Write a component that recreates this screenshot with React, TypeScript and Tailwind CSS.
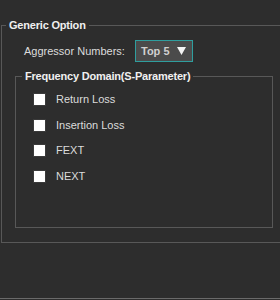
import React from 'react';

const items = ['Return Loss', 'Insertion Loss', 'FEXT', 'NEXT'];

const App = () => {
  return (
    <div
      className="relative w-[280px] h-[300px] overflow-hidden bg-[#2d2d2d] text-[11px] text-[#dcdcdc] whitespace-nowrap"
      style={{ fontFamily: '"Liberation Sans", Arial, sans-serif' }}
    >
      {/* Generic Option group */}
      <fieldset className="ml-[1px] mt-[17px] w-[300px] h-[226px] border border-[#585858]">
        <legend className="ml-[4px] px-[3px] font-bold leading-[16px] tracking-[-0.2px] text-[#f0f0f0]">
          Generic Option
        </legend>

        <div className="mt-[7px] ml-[22px] flex items-center h-[22px]">
          <span className="w-[111px]">Aggressor Numbers:</span>
          <div className="w-[58px] h-[22px] border border-[#2f9e9e] bg-[#4b4b4b] flex items-center justify-between pl-[5px] pr-[6px]">
            <span className="font-bold text-[#d0d0d0]">Top 5</span>
            <svg width="9" height="8" viewBox="0 0 9 8">
              <path d="M0 0 H9 L4.5 8 Z" fill="#f4f4f4" />
            </svg>
          </div>
        </div>

        {/* Frequency Domain group */}
        <fieldset className="ml-[13px] mt-[6px] w-[258px] h-[160px] border border-[#585858]">
          <legend className="ml-[6px] px-[3px] font-bold leading-[16px] tracking-[-0.2px] text-[#f0f0f0]">
            Frequency Domain(S-Parameter)
          </legend>
          <div className="mt-[9px] ml-[17px] flex flex-col gap-[12.5px]">
            {items.map((label) => (
              <label key={label} className="flex items-center h-[13px]">
                <span className="w-[13px] h-[13px] bg-white border border-[#3a3a3a] shrink-0" />
                <span className="ml-[10px]">{label}</span>
              </label>
            ))}
          </div>
        </fieldset>
      </fieldset>

      <div className="absolute left-0 right-0 bottom-[1px] h-[1px] bg-[#6a6a6a]" />
    </div>
  );
};

export default App;
